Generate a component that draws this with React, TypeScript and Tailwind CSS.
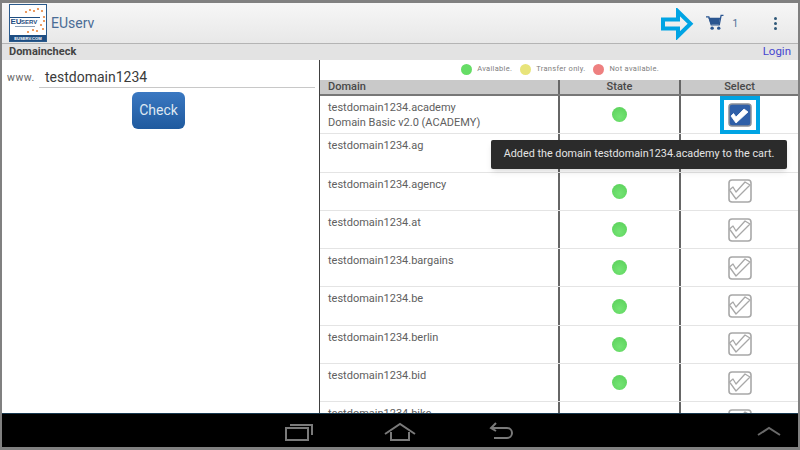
import React from "react";

const font = { fontFamily: '"Roboto", "Noto Sans", sans-serif' };

function Logo() {
  const dots = [[17,8],[21,6],[25,7],[29,5],[33,7],[35,13],[35,17],[32,21],[34,25],[28,27],[24,26],[19,28]];
  return (
    <svg width="38" height="38" viewBox="0 0 38 38" className="shrink-0">
      <rect x="0.5" y="0.5" width="37" height="37" fill="#ffffff" stroke="#2a5a8c" />
      {dots.map(([x, y], i) => (
        <circle key={i} cx={x} cy={y} r="1.1" fill="#e8843c" />
      ))}
      <rect x="1" y="31" width="36" height="6" fill="#1f4e82" />
      <rect x="1" y="13" width="30" height="1" fill="#1f4e82" />
      <text x="1.5" y="20" fontSize="8" fontWeight="700" fill="#1f4e82" fontFamily="Liberation Sans">EU</text>
      <text x="12" y="20" fontSize="6" fontWeight="700" fill="#1f4e82" fontFamily="Liberation Sans">SERV</text>
      <rect x="6" y="22" width="20" height="1" fill="#8aa0b8" />
      <text x="19" y="36" fontSize="4.2" fontWeight="700" fill="#ffffff" textAnchor="middle" fontFamily="Liberation Sans">EUSERV.COM</text>
    </svg>
  );
}

function Check({ on }: { on?: boolean }) {
  if (on) {
    return (
      <svg width="24" height="24" viewBox="0 0 24 24">
        <rect x="1" y="1" width="22" height="22" rx="3" fill="#2f5fa8" stroke="#8a8f98" strokeWidth="1.5" />
        <path d="M3 13 L8 20 L20 9 L16 6 L8 14 L5.5 10.5 Z" fill="#ffffff" stroke="#ffffff" strokeWidth="0.8" strokeLinejoin="round" />
      </svg>
    );
  }
  return (
    <svg width="24" height="24" viewBox="0 0 24 24">
      <rect x="1" y="1" width="22" height="22" rx="3" fill="#ffffff" stroke="#a8a8a8" strokeWidth="1.6" />
      <path d="M1.5 11 L8 20 L22 6 L17 3 L8 13 L5 8 Z" fill="#ffffff" stroke="#a8a8a8" strokeWidth="1.3" strokeLinejoin="round" />
    </svg>
  );
}

const rows: { name: string; sub?: string; on?: boolean }[] = [
  { name: "testdomain1234.academy", sub: "Domain Basic v2.0 (ACADEMY)", on: true },
  { name: "testdomain1234.ag" },
  { name: "testdomain1234.agency" },
  { name: "testdomain1234.at" },
  { name: "testdomain1234.bargains" },
  { name: "testdomain1234.be" },
  { name: "testdomain1234.berlin" },
  { name: "testdomain1234.bid" },
  { name: "testdomain1234.bike" },
];

export default function App() {
  return (
    <div className="relative w-[800px] h-[450px] overflow-hidden bg-[#808080] pt-[3px] pb-[3px] px-[2px]" style={font}>
      <div className="flex flex-col h-full bg-white">
        {/* Action bar */}
        <div className="h-[41px] shrink-0 flex items-center bg-gradient-to-b from-[#f6f6f6] to-[#e8e8e8] border-b border-[#b4b4b4]">
          <div className="ml-[7px] mr-[3px]"><Logo /></div>
          <span className="text-[14px] text-[#4a6c96] ml-[1px]">EUserv</span>
          <div className="ml-auto flex items-center">
            <svg width="19" height="17" viewBox="0 0 20 18" className="mb-[2px]">
              <path d="M1 3 H4 L6.5 11.5 H15 L17 1.5 H19.5" fill="none" stroke="#2a5590" strokeWidth="1.4" />
              <path d="M3.5 4 H16 L14.8 10.5 H6 Z" fill="#2a5590" />
              <circle cx="7.5" cy="15" r="1.8" fill="#2a5590" />
              <circle cx="14.5" cy="15" r="1.8" fill="#2a5590" />
            </svg>
            <span className="text-[10px] text-[#4a6c96] ml-[8px] mr-[36px]">1</span>
            <div className="flex flex-col gap-[2px] mr-[21px]">
              <span className="block w-[3px] h-[3px] bg-[#2f5878] rounded-full" />
              <span className="block w-[3px] h-[3px] bg-[#2f5878] rounded-full" />
              <span className="block w-[3px] h-[3px] bg-[#2f5878] rounded-full" />
            </div>
          </div>
        </div>
        {/* Sub header */}
        <div className="h-[16px] shrink-0 flex items-center justify-between bg-[#e3e3e3] pl-[7px] pr-[7px]">
          <span className="text-[11px] font-bold text-[#444444]">Domaincheck</span>
          <span className="text-[11.5px] text-[#4646d0]">Login</span>
        </div>
        {/* Body */}
        <div className="flex-1 flex min-h-0">
          <div className="w-[318px] shrink-0 border-r border-[#404040]">
            <div className="flex items-end h-[28px] pl-[5px]">
              <span className="text-[10.5px] text-[#666666] tracking-[0.5px] mb-[2px] w-[32px]">www.</span>
              <div className="relative w-[276px] h-[27px] border-b border-[#c8c8c8] pl-[6px] pt-[6px] flex items-center">
                <span className="text-[14px] text-[#3a3a3a]">testdomain1234</span>
              </div>
            </div>
            <div className="flex pl-[130px] mt-[4px]">
              <div className="w-[53px] h-[37px] rounded-[6px] bg-gradient-to-b from-[#3a78c2] to-[#1f5a9e] flex items-center justify-center text-[14px] text-[#dfe8f2]">
                Check
              </div>
            </div>
          </div>
          <div className="flex-1 min-w-0 overflow-hidden">
            <div className="h-[20px] pb-[2px] flex items-center justify-end pr-[139px] text-[7.5px] text-[#808080] tracking-[0.3px]">
              <span className="block w-[11px] h-[11px] rounded-full bg-[#66dd66]" />
              <span className="ml-[5px] mr-[8px]">Available.</span>
              <span className="block w-[11px] h-[11px] rounded-full bg-[#e8e47a]" />
              <span className="ml-[5px] mr-[8px]">Transfer only.</span>
              <span className="block w-[11px] h-[11px] rounded-full bg-[#ee8080]" />
              <span className="ml-[5px]">Not available.</span>
            </div>
            <div className="flex h-[16px] bg-[#c9c9c9] border-b-2 border-[#777777] text-[11px] text-[#484848] font-medium leading-[14px]">
              <div className="w-[240px] pl-[8px] border-r-2 border-[#666666]">Domain</div>
              <div className="w-[121px] text-center border-r-2 border-[#666666]">State</div>
              <div className="flex-1 text-center">Select</div>
            </div>
            {rows.map((r) => (
              <div key={r.name} className="flex h-[38.3px] shrink-0 border-b border-[#e4e4e4]">
                <div className="w-[240px] pl-[8px] pt-[4px] border-r-2 border-[#666666] text-[11px] leading-[15px] text-[#606060]">
                  <div>{r.name}</div>
                  {r.sub && <div>{r.sub}</div>}
                </div>
                <div className="w-[121px] flex items-center justify-center border-r-2 border-[#666666]">
                  <span className="block w-[15px] h-[15px] rounded-full bg-[radial-gradient(circle_at_50%_65%,#74e474,#58cf58)]" />
                </div>
                <div className="flex-1 flex items-center justify-center">
                  <Check on={r.on} />
                </div>
              </div>
            ))}
          </div>
        </div>
        {/* Nav bar */}
        <div className="h-[34px] shrink-0 relative flex items-center bg-black border-t border-[#17384f]">
          <div className="w-full flex items-center pl-[283px] pt-[1px]">
            <svg width="28" height="19" viewBox="0 0 28 19" fill="none" stroke="#7a7a7a" strokeWidth="2">
              <rect x="1" y="6" width="22" height="12" />
              <path d="M5 3 H27 V13" />
            </svg>
            <svg width="32" height="19" viewBox="0 0 32 19" fill="none" stroke="#7a7a7a" strokeWidth="2" className="ml-[71px]">
              <path d="M1 12 L16 2 L31 12" />
              <path d="M7 10 V18 H25 V10" />
            </svg>
            <svg width="26" height="18" viewBox="0 0 26 18" fill="none" stroke="#7a7a7a" strokeWidth="2" className="ml-[73px]">
              <path d="M2 6 H18 A5 5 0 0 1 18 16 H5" />
              <path d="M7 1 L2 6 L7 9" />
            </svg>
            <svg width="24" height="10" viewBox="0 0 24 10" fill="none" stroke="#6a6a6a" strokeWidth="2" className="ml-[242px]">
              <path d="M1 9 L12 2 L23 9" />
            </svg>
          </div>
        </div>
      </div>

      {/* Toast */}
      <div className="absolute left-[491px] top-[140px] w-[296px] h-[29px] bg-[#2b2b2b] rounded-[2px] shadow-md flex items-center justify-center text-[10.8px] text-[#e4e4e4]">
        Added the domain testdomain1234.academy to the cart.
      </div>
      {/* Annotation: highlight */}
      <div className="absolute left-[720px] top-[96px] w-[40px] h-[38px] border-[4px] border-[#00a4e4]" />
      {/* Annotation: arrow */}
      <svg className="absolute left-[660px] top-[8px]" width="34" height="32" viewBox="0 0 34 32" fill="none" stroke="#00a4e4" strokeWidth="4">
        <path d="M3 11.5 H18 V3.5 L30.5 15.8 L18 28 V20.5 H3 Z" />
      </svg>
    </div>
  );
}
